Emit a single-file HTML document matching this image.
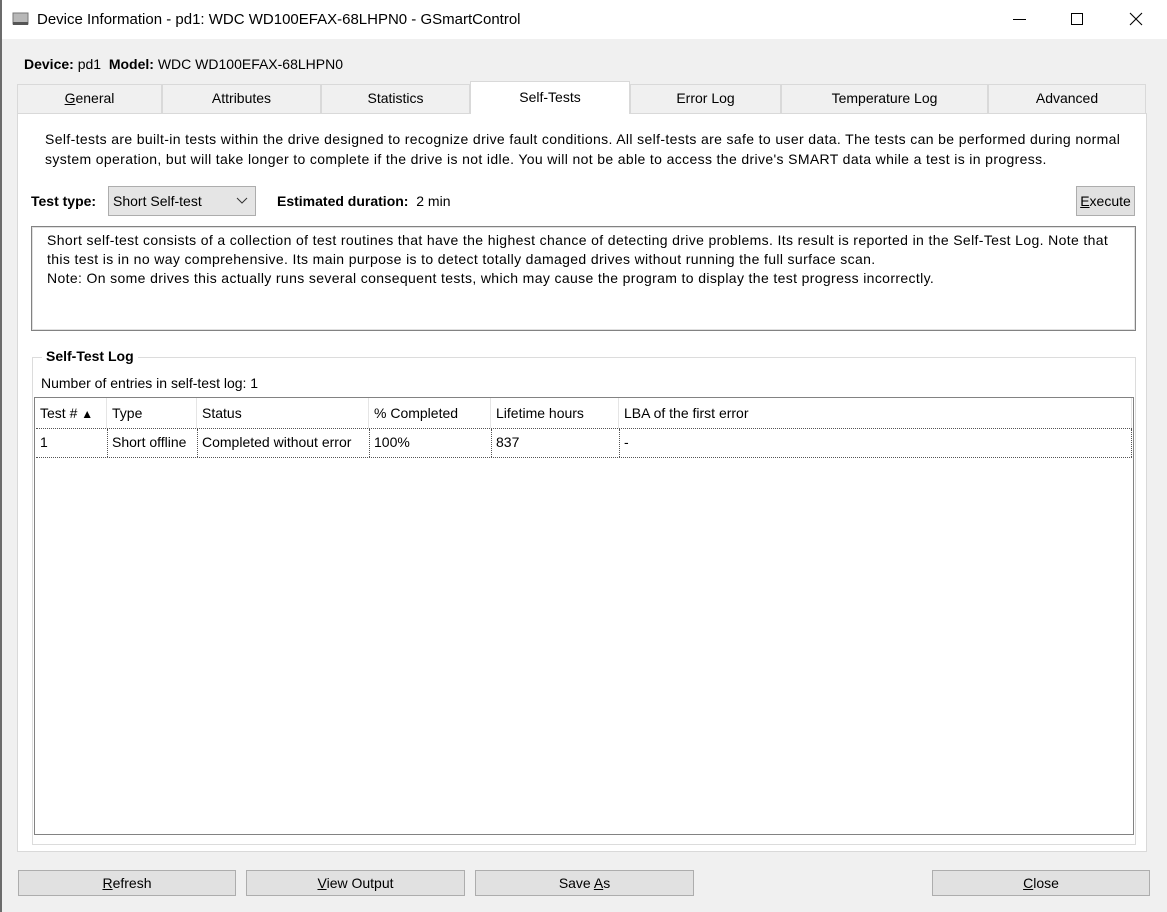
<!DOCTYPE html>
<html><head><meta charset="utf-8"><style>
*{box-sizing:border-box;margin:0;padding:0}
body{width:1167px;height:912px;background:#f0f0f0;font-family:"Liberation Sans",sans-serif;font-size:13px;color:#000;position:relative;overflow:hidden}
.a{position:absolute;white-space:nowrap}
.tb{left:0;top:0;width:1167px;height:39px;background:#fff}
.tab{top:84px;height:29px;background:#f0f0f0;border:1px solid #d9d9d9;border-bottom:none;text-align:center;line-height:27px;font-size:14px}
.btn{background:#e1e1e1;border:1px solid #adadad;text-align:center;font-size:14px}
u{text-decoration:underline}
.col{top:398px;height:30px;line-height:30px;padding-left:5px;font-size:14px;border-right:1px solid #e5e5e5}
.cell{top:429px;height:28px;line-height:27px;padding-left:4px;font-size:14px;border-left:1px dotted #555}
</style></head><body>
<div class="a" style="left:0;top:0;width:2px;height:912px;background:#6b6b6b;z-index:5"></div>
<div class="a tb"></div>
<svg class="a" style="left:12px;top:11px" width="18" height="16"><rect x="1" y="2" width="15" height="11" fill="#b8b8b8" stroke="#777"/><rect x="1" y="11" width="15" height="3" fill="#555"/></svg>
<div class="a" style="left:37px;top:11px;font-size:15px">Device Information - pd1: WDC WD100EFAX-68LHPN0 - GSmartControl</div>
<div class="a" style="left:1013px;top:19px;width:13px;height:1px;background:#000"></div>
<div class="a" style="left:1071px;top:13px;width:12px;height:12px;border:1px solid #000"></div>
<svg class="a" style="left:1129px;top:12px" width="14" height="14"><path d="M1 1L13 13M13 1L1 13" stroke="#000" stroke-width="1.1"/></svg>

<div class="a" style="left:24px;top:56px;font-size:14px"><b>Device:</b> pd1&nbsp; <b>Model:</b> WDC WD100EFAX-68LHPN0</div>

<div class="a" style="left:17px;top:113px;width:1130px;height:739px;background:#fff;border:1px solid #d9d9d9"></div>
<div class="a tab" style="left:17px;width:145px"><u>G</u>eneral</div>
<div class="a tab" style="left:162px;width:159px">Attributes</div>
<div class="a tab" style="left:321px;width:149px">Statistics</div>
<div class="a tab" style="left:470px;top:81px;height:33px;width:160px;background:#fff;line-height:30px">Self-Tests</div>
<div class="a tab" style="left:630px;width:151px">Error Log</div>
<div class="a tab" style="left:781px;width:207px">Temperature Log</div>
<div class="a tab" style="left:988px;width:158px">Advanced</div>

<div class="a" style="left:45px;top:129px;font-size:14px;line-height:20px;letter-spacing:0.36px">Self-tests are built-in tests within the drive designed to recognize drive fault conditions. All self-tests are safe to user data. The tests can be performed during normal<br>system operation, but will take longer to complete if the drive is not idle. You will not be able to access the drive's SMART data while a test is in progress.</div>

<div class="a" style="left:31px;top:193px;font-size:14px"><b>Test type:</b></div>
<div class="a btn" style="left:108px;top:186px;width:148px;height:30px;text-align:left;padding-left:4px;line-height:28px;background:#e5e5e5;border-color:#adadad">Short Self-test</div>
<svg class="a" style="left:236px;top:197px" width="12" height="8"><path d="M1 1L6 6L11 1" stroke="#333" fill="none"/></svg>
<div class="a" style="left:277px;top:193px;font-size:14px"><b>Estimated duration:</b>&nbsp; 2 min</div>
<div class="a btn" style="left:1076px;top:186px;width:59px;height:30px;line-height:28px"><u>E</u>xecute</div>

<div class="a" style="left:31px;top:226px;width:1105px;height:105px;border:1px solid #828282;background:#fff"><div style="border:1px solid #e0e0e0;height:100%"></div></div>
<div class="a" style="left:47px;top:231px;font-size:14px;line-height:19px;letter-spacing:0.36px">Short self-test consists of a collection of test routines that have the highest chance of detecting drive problems. Its result is reported in the Self-Test Log. Note that<br>this test is in no way comprehensive. Its main purpose is to detect totally damaged drives without running the full surface scan.<br>Note: On some drives this actually runs several consequent tests, which may cause the program to display the test progress incorrectly.</div>

<div class="a" style="left:32px;top:357px;width:1104px;height:488px;border:1px solid #dcdcdc"></div>
<div class="a" style="left:42px;top:348px;background:#fff;padding:0 4px;font-size:14px"><b>Self-Test Log</b></div>
<div class="a" style="left:41px;top:375px;font-size:14px">Number of entries in self-test log: 1</div>

<div class="a" style="left:34px;top:397px;width:1100px;height:438px;border:1px solid #828282;background:#fff"></div>
<div class="a col" style="left:35px;width:72px">Test # <span style="font-size:12px">▲</span></div>
<div class="a col" style="left:107px;width:90px">Type</div>
<div class="a col" style="left:197px;width:172px">Status</div>
<div class="a col" style="left:369px;width:122px">% Completed</div>
<div class="a col" style="left:491px;width:128px">Lifetime hours</div>
<div class="a col" style="left:619px;width:513px">LBA of the first error</div>
<div class="a" style="left:36px;top:428px;width:1096px;height:30px;border-top:1px dotted #555;border-bottom:1px dotted #555"></div>
<div class="a cell" style="left:36px;width:71px;border-left:none">1</div>
<div class="a cell" style="left:107px;width:90px">Short offline</div>
<div class="a cell" style="left:197px;width:172px">Completed without error</div>
<div class="a cell" style="left:369px;width:122px">100%</div>
<div class="a cell" style="left:491px;width:128px">837</div>
<div class="a cell" style="left:619px;width:513px;border-right:1px dotted #555">-</div>

<div class="a btn" style="left:18px;top:870px;width:218px;height:26px;line-height:24px"><u>R</u>efresh</div>
<div class="a btn" style="left:246px;top:870px;width:219px;height:26px;line-height:24px"><u>V</u>iew Output</div>
<div class="a btn" style="left:475px;top:870px;width:219px;height:26px;line-height:24px">Save <u>A</u>s</div>
<div class="a btn" style="left:932px;top:870px;width:218px;height:26px;line-height:24px"><u>C</u>lose</div>
</body></html>
